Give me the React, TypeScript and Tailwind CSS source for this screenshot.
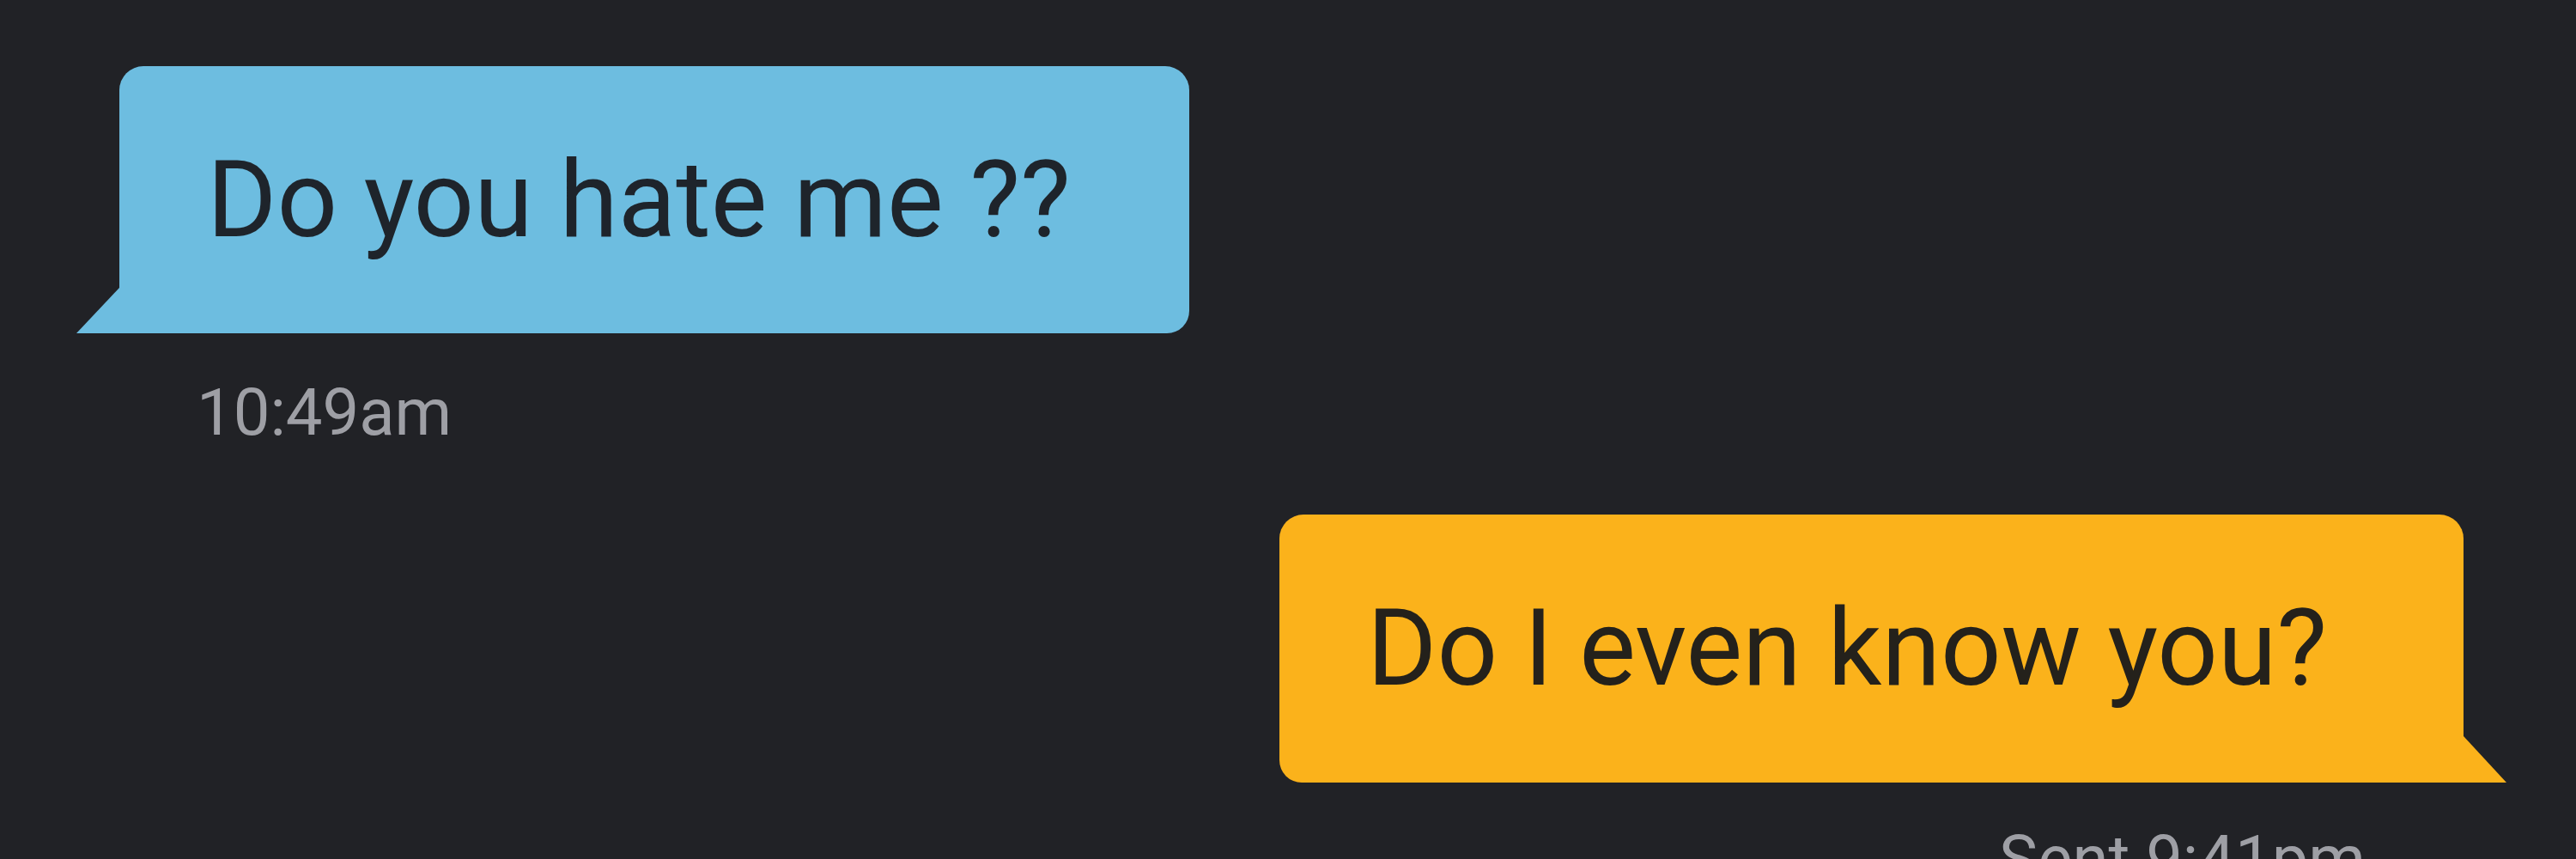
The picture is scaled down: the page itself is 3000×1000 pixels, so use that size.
import React from "react";

export default function App() {
  return (
    <div
      className="w-[3000px] h-[1000px] overflow-hidden bg-[#212226] flex flex-col"
      style={{ fontFamily: "Roboto, 'Liberation Sans', sans-serif" }}
    >
      {/* Received message */}
      <div className="flex flex-col items-start pl-[139px] pt-[77px]">
        <div className="relative w-[1246px] h-[311px] bg-[#6dbde0] rounded-tl-[28px] rounded-tr-[28px] rounded-br-[26px] flex items-center pl-[102px]">
          <span className="text-[124px] leading-none text-[#1e242b] whitespace-nowrap">
            Do you hate me ??
          </span>
          <div className="absolute left-[-50px] bottom-0 w-[50px] h-[53px] bg-[#6dbde0] [clip-path:polygon(100%_0,100%_100%,0_100%)]" />
        </div>
        <div className="mt-[54px] ml-[90px] text-[76px] leading-none text-[#9e9fa5] whitespace-nowrap">
          10:49am
        </div>
      </div>

      {/* Sent message */}
      <div className="flex flex-col items-end pr-[131px] mt-[81px]">
        <div className="relative w-[1379px] h-[312px] bg-[#fbb21b] rounded-tl-[28px] rounded-tr-[28px] rounded-bl-[26px] flex items-center pl-[102px]">
          <span className="text-[124px] leading-none text-[#24211b] whitespace-nowrap">
            Do I even know you?
          </span>
          <div className="absolute right-[-50px] bottom-0 w-[50px] h-[54px] bg-[#fbb21b] [clip-path:polygon(0_0,100%_100%,0_100%)]" />
        </div>
        <div className="mt-[51px] mr-[114px] text-[76px] leading-none text-[#9e9fa5] whitespace-nowrap">
          Sent 9:41pm
        </div>
      </div>
    </div>
  );
}
